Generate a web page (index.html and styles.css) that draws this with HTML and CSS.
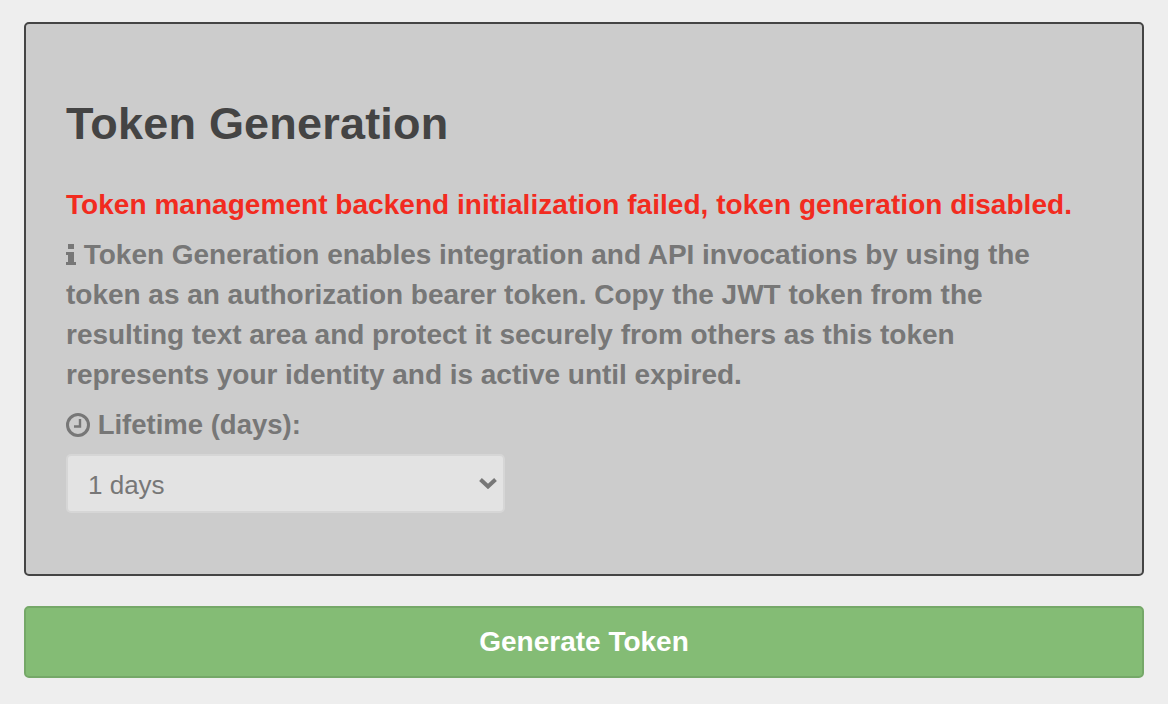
FILE: index.html
```html
<!DOCTYPE html>
<html lang="en">
<head>
  <meta charset="UTF-8">
  <title>Token Generation</title>
  <link rel="stylesheet" href="styles.css">
</head>
<body>
  <div class="panel">
    <h2>Token Generation</h2>
    <div class="error">Token management backend initialization failed, token generation disabled.</div>
    <div class="info">
      <svg class="icon-info" viewBox="0 0 10 21" width="10" height="21"><path d="M2 0h6v5H2zM0 8h8v10h2v3H0v-3h2v-7H0z" fill="#777"/></svg>
      Token Generation enables integration and API invocations by using the token as an authorization bearer token. Copy the JWT token from the resulting text area and protect it securely from others as this token represents your identity and is active until expired.
    </div>
    <label class="field-label" for="lifetime">
      <svg class="icon-clock" viewBox="0 0 24 24" width="24" height="24"><circle cx="12" cy="12" r="10.5" fill="none" stroke="#777" stroke-width="3"/><path d="M14 6v7.5H8" fill="none" stroke="#777" stroke-width="2.4"/></svg>
      Lifetime (days):
    </label>
    <div class="select-wrap">
      <select id="lifetime" class="lifetime" disabled>
        <option>1 days</option>
      </select>
      <svg class="chevron" viewBox="0 0 18 12" width="18" height="12"><path d="M1.5 2.5L9 9.5l7.5-7" fill="none" stroke="#777" stroke-width="4"/></svg>
    </div>
  </div>
  <button class="generate" disabled>Generate Token</button>
</body>
</html>
```

FILE: styles.css
```css
html, body { margin: 0; padding: 0; }
body { background: #eee; font-family: "Liberation Sans", Arial, sans-serif; padding: 22px 24px 26px; }
.panel { background: #ccc; border: 2px solid #444; border-radius: 5px; padding: 72px 40px 60px; height: 554px; box-sizing: border-box; }
h2 { margin: 0 0 33px; font-size: 45px; letter-spacing: .2px; line-height: 56px; font-weight: bold; color: #444; }
.error { color: #f22b1f; font-size: 28px; letter-spacing: .04px; line-height: 40px; font-weight: bold; }
.info { max-width: 1000px; color: #777; font-size: 28px; letter-spacing: -.02px; line-height: 40px; font-weight: bold; margin-top: 10px; }
.icon-info { vertical-align: -1px; }
.field-label { display: block; color: #777; font-size: 27.5px; line-height: 40px; font-weight: bold; margin-top: 10px; }
.icon-clock { vertical-align: -3px; }
.select-wrap { position: relative; width: 439px; margin-top: 9px; }
.lifetime { display: block; width: 100%; height: 59px; padding: 2px 20px 0; appearance: none; font: 26px "Liberation Sans", Arial, sans-serif; color: #777; background: #e3e3e3; border: 2px solid #d6d6d6; border-radius: 5px; opacity: 1; }
.chevron { position: absolute; right: 8px; top: 23px; pointer-events: none; }
.generate { display: block; width: 100%; height: 72px; margin-top: 30px; background: #84bc75; color: #fff; border: 2px solid #75a868; border-radius: 5px; font: bold 28px "Liberation Sans", Arial, sans-serif; }
```
